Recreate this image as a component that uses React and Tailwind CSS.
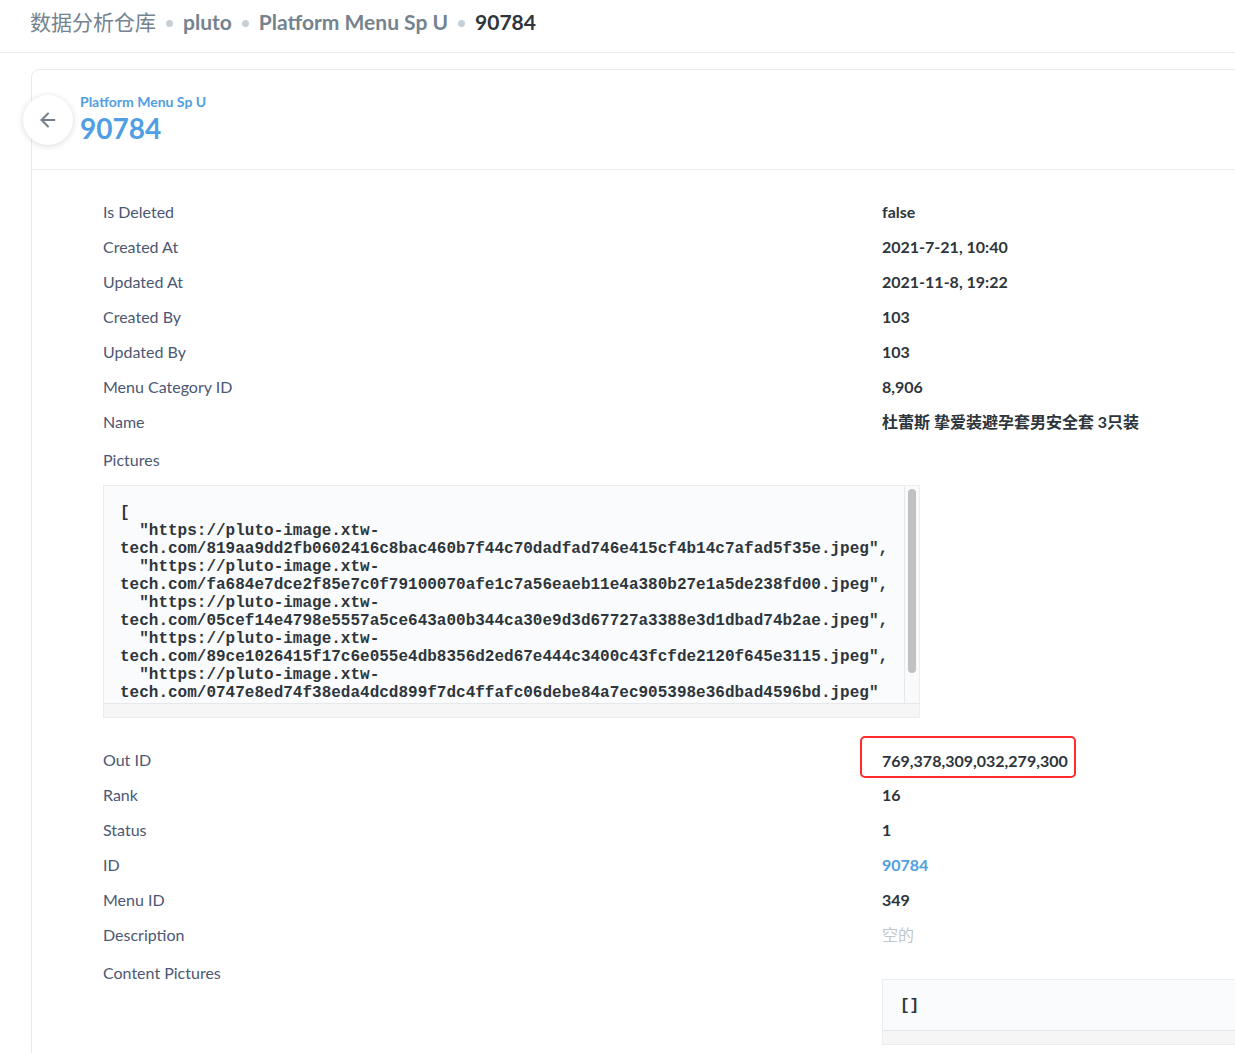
import { ArrowLeft } from 'lucide-react';

const rowsTop = [
    { label: 'Is Deleted', value: 'false' },
    { label: 'Created At', value: '2021-7-21, 10:40' },
    { label: 'Updated At', value: '2021-11-8, 19:22' },
    { label: 'Created By', value: '103' },
    { label: 'Updated By', value: '103' },
    { label: 'Menu Category ID', value: '8,906' },
    { label: 'Name', value: '杜蕾斯 挚爱装避孕套男安全套 3只装' },
];

const rowsBottom = [
    { label: 'Rank', value: '16' },
    { label: 'Status', value: '1' },
    { label: 'ID', value: '90784', link: true },
    { label: 'Menu ID', value: '349' },
    { label: 'Description', value: '空的', empty: true },
];

const pictureLines = [
    '[',
    '  "https://pluto-image.xtw-',
    'tech.com/819aa9dd2fb0602416c8bac460b7f44c70dadfad746e415cf4b14c7afad5f35e.jpeg",',
    '  "https://pluto-image.xtw-',
    'tech.com/fa684e7dce2f85e7c0f79100070afe1c7a56eaeb11e4a380b27e1a5de238fd00.jpeg",',
    '  "https://pluto-image.xtw-',
    'tech.com/05cef14e4798e5557a5ce643a00b344ca30e9d3d67727a3388e3d1dbad74b2ae.jpeg",',
    '  "https://pluto-image.xtw-',
    'tech.com/89ce1026415f17c6e055e4db8356d2ed67e444c3400c43fcfde2120f645e3115.jpeg",',
    '  "https://pluto-image.xtw-',
    'tech.com/0747e8ed74f38eda4dcd899f7dc4ffafc06debe84a7ec905398e36dbad4596bd.jpeg"',
];

const lato = { fontFamily: 'Lato, "Noto Sans CJK SC", sans-serif' };
const mono = { fontFamily: '"Liberation Mono", monospace' };

function Dot() {
    return <span className="w-[7px] h-[7px] rounded-full bg-[#c7cfd6] mx-[10px] mt-[2px]" />;
}

function Row({ label, value, link, empty, boxed }) {
    return (
        <div className="flex items-center h-[35px]">
            <div className="w-[779px] shrink-0 -mt-[2px] text-[16px] text-[#4c5773]">{label}</div>
            {boxed ? (
                // red annotation box around the value
                <div className="-ml-[22px] -mt-[8px] h-[42px] flex items-center pt-[8px] pl-[20px] pr-[6px] border-2 border-[#ff2b2b] rounded-[5px] text-[16px] font-bold text-[#2e353b]">
                    {value}
                </div>
            ) : (
                <div
                    className={
                        'text-[16px] -mt-[1px] ' +
                        (link ? 'font-bold text-[#509ee3]' : empty ? 'text-[#c0c6cc]' : 'font-bold text-[#2e353b]')
                    }
                >
                    {value}
                </div>
            )}
        </div>
    );
}

export default function App() {
    return (
        <div className="min-h-[1053px] bg-white overflow-hidden" style={lato}>
            {/* breadcrumb header */}
            <div className="h-[53px] border-b border-[#ececec] flex items-center pl-[30px] pb-[8px] text-[21px] font-bold text-[#74838f]">
                <span className="font-normal" style={{ fontFamily: '"Noto Sans CJK SC", sans-serif' }}>数据分析仓库</span>
                <Dot />
                <span>pluto</span>
                <Dot />
                <span>Platform Menu Sp U</span>
                <Dot />
                <span className="text-[#2e353b]">90784</span>
            </div>

            {/* card */}
            <div className="mt-[16px] ml-[31px] w-[1260px] border border-[#e8ebee] rounded-tl-[8px] min-h-[990px]">
                <div className="h-[100px] border-b border-[#ececec] flex items-center pl-[48px]">
                    <button className="-ml-[57px] w-[50px] h-[50px] rounded-full bg-white shadow-[0_1px_6px_rgba(0,0,0,0.15)] flex items-center justify-center text-[#727f8b]">
                        <ArrowLeft size={22} strokeWidth={2.2} />
                    </button>
                    <div className="ml-[7px] -mt-[2px]">
                        <div className="text-[14px] font-bold text-[#509ee3] leading-[18px]">Platform Menu Sp U</div>
                        <div className="text-[28px] font-bold text-[#509ee3] leading-[34px]">90784</div>
                    </div>
                </div>

                <div className="pl-[71px] pt-[25px]">
                    {rowsTop.map((r) => (
                        <Row key={r.label} {...r} />
                    ))}

                    {/* Pictures */}
                    <div className="pt-[10px] text-[16px] text-[#4c5773] leading-[20px]">Pictures</div>
                    <div className="mt-[15px] w-[817px] h-[233px] border border-[#ebeef0] bg-[#f9fbfc] flex flex-col">
                        <div className="flex h-[218px]">
                            <div className="flex-1 overflow-hidden border-r border-b border-[#e6e8ea] pl-[16px] pt-[18px]">
                                <pre className="text-[16px] leading-[18px] font-bold text-[#2e353b]" style={mono}>
                                    {pictureLines.join('\n')}
                                </pre>
                            </div>
                            <div className="w-[14px] bg-[#fafafa] border-b border-[#e6e8ea] pt-[3px]">
                                <div className="mx-auto w-[8px] h-[184px] rounded-full bg-[#c1c1c1]" />
                            </div>
                        </div>
                        <div className="flex-1 bg-[#f6f6f6]" />
                    </div>

                    <div className="mt-[25px]">
                        <Row label="Out ID" value="769,378,309,032,279,300" boxed />
                        {rowsBottom.map((r) => (
                            <Row key={r.label} {...r} />
                        ))}
                    </div>

                    {/* Content Pictures */}
                    <div className="flex">
                        <div className="w-[779px] shrink-0 pt-[10px] text-[16px] text-[#4c5773] leading-[20px]">Content Pictures</div>
                        <div className="mt-[26px] flex-1 h-[66px] border border-[#ebeef0] bg-[#f9fbfc] flex flex-col">
                            <div className="h-[51px] border-b border-[#e6e8ea] pl-[17px] pt-[17px]">
                                <pre className="text-[16px] leading-[18px] font-bold text-[#2e353b]" style={mono}>
                                    []
                                </pre>
                            </div>
                            <div className="flex-1 bg-[#f6f6f6]" />
                        </div>
                    </div>
                </div>
            </div>
        </div>
    );
}
